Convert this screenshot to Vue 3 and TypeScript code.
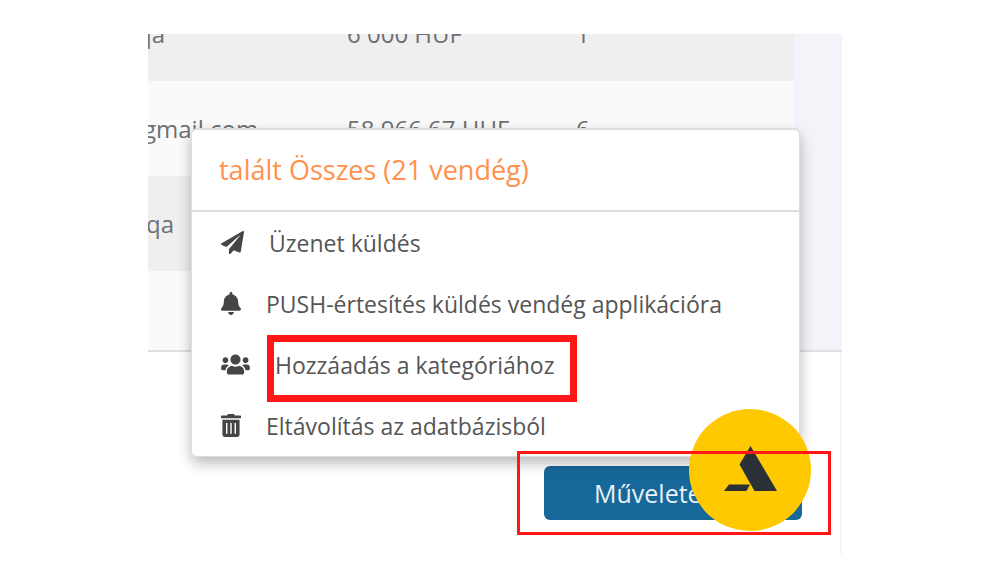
<script setup lang="ts">
interface GuestRow {
  email: string
  scrolled: number
  spent: string
  visits: string
}

interface MenuAction {
  label: string
  viewBox: string
  path: string
  size: string
  marked?: boolean
}

const guests: GuestRow[] = [
  { email: 'qa', scrolled: 11, spent: '6 000 HUF', visits: '1' },
  { email: 'gmail.com', scrolled: 5, spent: '58 966,67 HUF', visits: '6' },
  { email: 'qa', scrolled: 2, spent: '', visits: '' },
]

const actions: MenuAction[] = [
  {
    label: 'Üzenet küldés',
    viewBox: '0 0 512 512',
    size: 'regular',
    path: 'M476 3.2L12.5 270.6c-18.1 10.4-15.8 35.6 2.2 43.2L121 358.4l287.3-253.2c5.5-4.9 13.3 2.6 8.6 8.3L176 407v80.5c0 23.6 28.5 32.9 42.5 15.8L282 426l124.6 52.2c14.2 6 30.4-2.9 33-18.2l72-432C515 7.8 493.3-6.8 476 3.2z',
  },
  {
    label: 'PUSH-értesítés küldés vendég applikációra',
    viewBox: '0 0 448 512',
    size: 'narrow',
    path: 'M224 512c35.32 0 63.97-28.65 63.97-64H160.03c0 35.35 28.65 64 63.97 64zm215.39-149.71c-19.32-20.76-55.47-51.99-55.47-154.29 0-77.7-54.48-139.9-127.94-155.16V32c0-17.67-14.32-32-31.98-32s-31.98 14.33-31.98 32v20.84C118.56 68.1 64.08 130.3 64.08 208c0 102.3-36.15 133.53-55.47 154.29-6 6.45-8.66 14.16-8.61 21.71.11 16.4 12.98 32 32.1 32h383.8c19.12 0 32-15.6 32.1-32 .05-7.55-2.61-15.27-8.61-21.71z',
  },
  {
    label: 'Hozzáadás a kategóriához',
    viewBox: '0 0 640 512',
    size: 'wide',
    marked: true,
    path: 'M96 224c35.3 0 64-28.7 64-64s-28.7-64-64-64-64 28.7-64 64 28.7 64 64 64zm448 0c35.3 0 64-28.7 64-64s-28.7-64-64-64-64 28.7-64 64 28.7 64 64 64zm32 32h-64c-17.6 0-33.5 7.1-45.1 18.6 40.3 22.1 68.9 62 75.1 109.4h66c17.7 0 32-14.3 32-32v-32c0-35.3-28.7-64-64-64zm-256 0c61.9 0 112-50.1 112-112S381.9 32 320 32 208 82.1 208 144s50.1 112 112 112zm76.8 32h-8.3c-20.8 10-43.9 16-68.5 16s-47.6-6-68.5-16h-8.3C179.6 288 128 339.6 128 403.2V432c0 26.5 21.5 48 48 48h288c26.5 0 48-21.5 48-48v-28.8c0-63.6-51.6-115.2-115.2-115.2zm-223.7-13.4C161.5 263.1 145.6 256 128 256H64c-35.3 0-64 28.7-64 64v32c0 17.7 14.3 32 32 32h65.9c6.3-47.4 34.9-87.3 75.2-109.4z',
  },
  {
    label: 'Eltávolítás az adatbázisból',
    viewBox: '0 0 448 512',
    size: 'narrow',
    path: 'M32 464a48 48 0 0 0 48 48h288a48 48 0 0 0 48-48V128H32zm272-256a16 16 0 0 1 32 0v224a16 16 0 0 1-32 0zm-96 0a16 16 0 0 1 32 0v224a16 16 0 0 1-32 0zm-96 0a16 16 0 0 1 32 0v224a16 16 0 0 1-32 0zM432 32H312l-9.4-18.7A24 24 0 0 0 281.1 0H166.8a23.72 23.72 0 0 0-21.4 13.3L136 32H16A16 16 0 0 0 0 48v32a16 16 0 0 0 16 16h416a16 16 0 0 0 16-16V48a16 16 0 0 0-16-16z',
  },
]
</script>

<template>
  <main class="page">
    <div class="board">
      <section class="content">
        <table class="guests">
          <colgroup>
            <col class="col-email" />
            <col class="col-spent" />
            <col />
          </colgroup>
          <tbody>
            <tr v-for="(guest, i) in guests" :key="i">
              <td><span :style="{ marginLeft: -guest.scrolled + 'px' }">{{ guest.email }}</span></td>
              <td>{{ guest.spent }}</td>
              <td>{{ guest.visits }}</td>
            </tr>
            <tr class="last">
              <td colspan="3"></td>
            </tr>
          </tbody>
        </table>
      </section>

      <footer class="footer">
        <button class="operations" type="button">Műveletek</button>
      </footer>

      <div class="menu">
        <h2 class="menu-title">talált Összes (21 vendég)</h2>
        <ul class="menu-list">
          <li v-for="action in actions" :key="action.label">
            <button type="button" class="action">
              <svg :class="['icon', action.size]" :viewBox="action.viewBox" aria-hidden="true">
                <path :d="action.path" />
              </svg>
              <span :class="{ marked: action.marked }">{{ action.label }}</span>
            </button>
          </li>
        </ul>
      </div>

      <button class="assistant" type="button" aria-label="Asszisztens">
        <svg viewBox="0 0 122 122" aria-hidden="true">
          <path d="M61.500 37 L88 82 H65.500 L50.500 55.500 Z" />
          <path d="M40 75.500 H61 L57.500 82 H35 Z" />
        </svg>
      </button>
      <div class="marker"></div>
    </div>
  </main>
</template>

<style>
body {
  margin: 0;
  background: #fff;
}
</style>

<style scoped>
.page {
  box-sizing: border-box;
  padding: 34px 158px 9px 148px;
  font-family: "Open Sans", "Noto Sans", sans-serif;
  color: #555;
}

.board {
  position: relative;
  overflow: hidden;
}

.content {
  overflow: hidden;
  padding-right: 48px;
  background: #f2f4f9;
  border-bottom: 2px solid #e0e0e0;
}

.guests {
  width: 100%;
  margin-top: -48px;
  table-layout: fixed;
  border-collapse: collapse;
  font-size: 24px;
  color: #6c7073;
}

.col-email {
  width: 199px;
}

.col-spent {
  width: 229px;
}

.guests tr {
  height: 95px;
  background: #efefef;
}

.guests tr:nth-child(even) {
  background: #fafafa;
}

.guests tr.last {
  height: 79px;
}

.guests td {
  padding: 0;
  white-space: nowrap;
}

.footer {
  display: flex;
  justify-content: flex-end;
  padding: 114px 38px 34px 0;
  background: #fff;
  border-right: 2px solid #f4f5fa;
}

.operations {
  width: 258px;
  height: 54px;
  padding: 0 0 0 50px;
  border: 0;
  border-radius: 6px;
  background: #17689a;
  color: #e9f1f6;
  font: inherit;
  font-size: 25px;
  text-align: left;
}

.menu {
  position: absolute;
  right: 42px;
  bottom: 97px;
  left: 43px;
  box-sizing: border-box;
  border: 1px solid #dedede;
  border-top-width: 2px;
  border-radius: 6px;
  background: #fff;
  box-shadow: 0 6px 14px rgba(0, 0, 0, 0.28);
}

.menu-title {
  margin: 0;
  padding: 0 27px;
  border-bottom: 2px solid #dedede;
  font-size: 27px;
  font-weight: 400;
  line-height: 80px;
  color: #ff914d;
}

.menu-list {
  margin: 0;
  padding: 0;
  list-style: none;
}

.action {
  display: flex;
  align-items: center;
  gap: 25px;
  width: 100%;
  height: 61px;
  padding: 0 29px;
  border: 0;
  background: none;
  color: inherit;
  font: inherit;
  font-size: 23px;
  text-align: left;
}

.icon {
  flex: none;
  height: 23px;
  fill: #454545;
}

.regular {
  width: 23px;
}

.narrow {
  width: 20px;
}

.wide {
  width: 29px;
}

.marked {
  position: relative;
}

.marked::after {
  content: "";
  position: absolute;
  top: -14px;
  right: -23px;
  bottom: -21px;
  left: -8px;
  border: 7px solid #ff1616;
}

.assistant {
  position: absolute;
  right: 31px;
  bottom: 23px;
  width: 122px;
  height: 122px;
  padding: 0;
  border: 0;
  border-radius: 50%;
  background: #ffc900;
}

.assistant svg {
  display: block;
  fill: #293136;
}

.marker {
  position: absolute;
  right: 11px;
  bottom: 19px;
  width: 308px;
  height: 78px;
  border: 3px solid #ff1616;
}
</style>
